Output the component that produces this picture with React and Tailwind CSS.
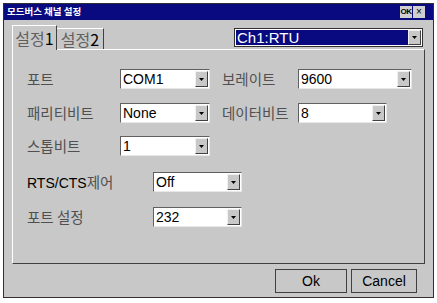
import React from 'react';

const KO = { fontFamily: '"Noto Sans CJK KR", "Noto Sans", sans-serif' };
const LAT = { fontFamily: '"Liberation Sans Narrow", "Liberation Sans", Arial, sans-serif' };

function Arrow() {
  return (
    <div className="w-[13px] h-full flex items-center justify-center bg-[#c8c8c8] border-t border-l border-t-[#f0f0f0] border-l-[#f0f0f0] border-b border-r border-b-[#404040] border-r-[#404040]">
      <svg width="5" height="3" viewBox="0 0 5 3">
        <path d="M0 0h5L2.5 3z" fill="#000" />
      </svg>
    </div>
  );
}

function Combo({ value, w }) {
  return (
    <div
      className={`${w} h-[20px] flex items-stretch bg-white border-t border-l border-t-[#606060] border-l-[#606060] border-b border-r border-b-[#e8e8e8] border-r-[#e8e8e8] p-[1px] pl-[2px]`}
    >
      <span className="flex-1 text-[14px] leading-[17px] text-black" style={LAT}>
        {value}
      </span>
      <Arrow />
    </div>
  );
}

function Label({ children, w }) {
  return (
    <span className={`${w} text-[14.5px] leading-[20px] text-[#505050]`} style={KO}>
      {children}
    </span>
  );
}

export default function App() {
  return (
    <div className="w-[437px] h-[303px] bg-white pt-[3px] pl-[3px]">
      <div className="w-[431px] h-[295px] bg-[#c8c8c8] border border-[#303030] flex flex-col">
        {/* Title bar */}
        <div className="h-[16px] bg-[#0a0a80] flex items-center pl-[3px] pr-[8px]">
          <span className="text-white text-[9.5px] font-bold leading-none flex-1" style={KO}>
            모드버스 채널 설정
          </span>
          <div className="w-[12px] h-[12px] bg-[#d0d0d0] flex items-center justify-center text-[8px] font-bold leading-none text-black tracking-tighter" style={LAT}>
            OK
          </div>
          <div className="w-[12px] h-[12px] ml-[1px] bg-[#d0d0d0] flex items-center justify-center text-[10px] leading-none text-black" style={LAT}>
            ×
          </div>
        </div>

        {/* Tabs row */}
        <div className="h-[29px] flex items-end pl-[8px] pr-[10px] relative">
          <div className="w-[45px] h-[25px] border-t border-l border-r border-t-white border-l-white border-r-[#404040] flex items-center justify-center -mb-px bg-[#c8c8c8] z-10">
            <span className="text-[16px] leading-none text-[#606060]" style={KO}>
              설정<span className="text-black">1</span>
            </span>
          </div>
          <div className="w-[47px] h-[21px] border-t border-r border-t-white border-r-[#404040] flex items-center justify-center">
            <span className="text-[16px] leading-none text-[#606060]" style={KO}>
              설정<span className="text-black">2</span>
            </span>
          </div>
          <div className="flex-1" />
          <div className="w-[189px] h-[19px] mb-[2px] flex items-stretch bg-white border border-[#303030] p-[1px]">
            <span className="flex-1 bg-[#0a0a80] text-white text-[15px] leading-[15px] pl-[1px]" style={LAT}>
              Ch1:RTU
            </span>
            <Arrow />
          </div>
        </div>

        {/* Panel */}
        <div className="mx-[8px] h-[215px] border-t border-l border-t-white border-l-white border-r border-b border-r-[#404040] border-b-[#404040] pl-[14px] pt-[19px]">
          <div className="flex items-center h-[20px]">
            <Label w="w-[93px]">포트</Label>
            <Combo value="COM1" w="w-[90px]" />
            <span className="w-[12px]" />
            <Label w="w-[76px]">보레이트</Label>
            <Combo value="9600" w="w-[114px]" />
          </div>
          <div className="flex items-center h-[20px] mt-[14px]">
            <Label w="w-[93px]">패리티비트</Label>
            <Combo value="None" w="w-[90px]" />
            <span className="w-[12px]" />
            <Label w="w-[76px]">데이터비트</Label>
            <Combo value="8" w="w-[89px]" />
          </div>
          <div className="flex items-center h-[20px] mt-[13px]">
            <Label w="w-[93px]">스톱비트</Label>
            <Combo value="1" w="w-[90px]" />
          </div>
          <div className="flex items-center h-[20px] mt-[16px]">
            <span className="w-[126px] text-[14px] leading-[20px] text-black" style={LAT}>
              RTS/CTS<span className="text-[#505050] text-[14.5px]" style={KO}>제어</span>
            </span>
            <Combo value="Off" w="w-[89px]" />
          </div>
          <div className="flex items-center h-[20px] mt-[15px]">
            <Label w="w-[126px]">포트 설정</Label>
            <Combo value="232" w="w-[89px]" />
          </div>
        </div>

        {/* Buttons */}
        <div className="flex justify-end pr-[16px] pt-[5px] gap-[4px]">
          <button className="w-[72px] h-[24px] bg-[#c8c8c8] border border-[#404040] text-[14px] text-black" style={LAT}>
            Ok
          </button>
          <button className="w-[66px] h-[24px] bg-[#c8c8c8] border border-[#404040] text-[14px] text-black" style={LAT}>
            Cancel
          </button>
        </div>
      </div>
    </div>
  );
}
